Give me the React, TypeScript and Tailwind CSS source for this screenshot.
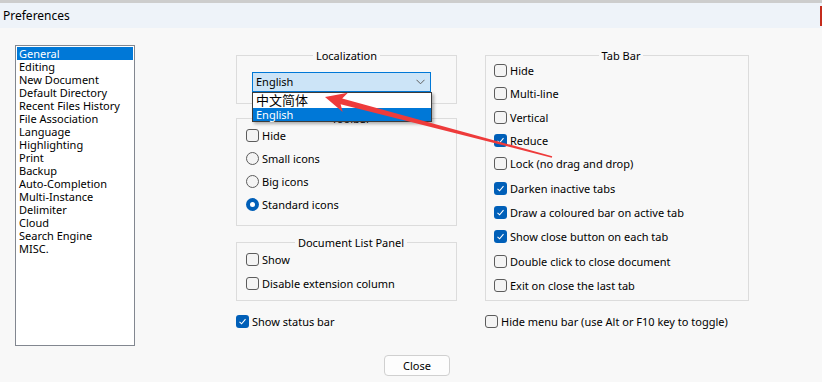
import React from 'react';

const FONT = { fontFamily: '"Noto Sans", "Noto Sans CJK SC", sans-serif' };

const categories = [
  'General', 'Editing', 'New Document', 'Default Directory', 'Recent Files History',
  'File Association', 'Language', 'Highlighting', 'Print', 'Backup',
  'Auto-Completion', 'Multi-Instance', 'Delimiter', 'Cloud', 'Search Engine', 'MISC.',
];

// row heights follow the uneven spacing of the original dialog
const tabBarOptions: { label: string; checked: boolean; h: string }[] = [
  { label: 'Hide', checked: false, h: 'h-[23px]' },
  { label: 'Multi-line', checked: false, h: 'h-[23px]' },
  { label: 'Vertical', checked: false, h: 'h-[24px]' },
  { label: 'Reduce', checked: true, h: 'h-[23px]' },
  { label: 'Lock (no drag and drop)', checked: false, h: 'h-[23px]' },
  { label: 'Darken inactive tabs', checked: true, h: 'h-[26px]' },
  { label: 'Draw a coloured bar on active tab', checked: true, h: 'h-[23px]' },
  { label: 'Show close button on each tab', checked: true, h: 'h-[25px]' },
  { label: 'Double click to close document', checked: false, h: 'h-[24px]' },
  { label: 'Exit on close the last tab', checked: false, h: 'h-[24px]' },
];

const Checkbox = ({ checked }: { checked?: boolean }) =>
  checked ? (
    <span className="w-[13px] h-[13px] rounded-[3px] bg-[#005fb8] flex items-center justify-center shrink-0">
      <svg width="9" height="9" viewBox="0 0 9 9">
        <polyline points="1.5,4.8 3.6,6.8 7.5,2.2" fill="none" stroke="#fff" strokeWidth="1.1" />
      </svg>
    </span>
  ) : (
    <span className="w-[13px] h-[13px] rounded-[3px] border border-[#5c5c5c] bg-[#f4f4f4] shrink-0" />
  );

const Radio = ({ checked }: { checked?: boolean }) =>
  checked ? (
    <span className="w-[13px] h-[13px] rounded-full bg-[#005fb8] flex items-center justify-center shrink-0">
      <span className="w-[5px] h-[5px] rounded-full bg-white" />
    </span>
  ) : (
    <span className="w-[13px] h-[13px] rounded-full border border-[#5c5c5c] bg-[#f4f4f4] shrink-0" />
  );

const Row = ({ children, label, h = 'h-[24px]' }: { children: React.ReactNode; label: string; h?: string }) => (
  <div className={`flex items-center gap-[3px] ${h}`}>
    {children}
    <span className="leading-[13px] whitespace-nowrap">{label}</span>
  </div>
);

const Legend = ({ title }: { title: string }) => (
  <div className="-mt-[7px] mx-auto w-fit px-[3px] bg-[#f8f8f8] leading-[14px]">{title}</div>
);

export default function App() {
  return (
    <div className="w-[822px] h-[382px] bg-[#f8f8f8] text-[11px] text-black relative overflow-hidden flex flex-col" style={FONT}>
      <div className="h-[3px] bg-[#cdcdcd]" />
      <div className="h-[25px] bg-[#eef3f9] flex items-center justify-between pl-[3px]">
        <span className="leading-[14px] text-[12px]">Preferences</span>
        <div className="w-[2px] h-[20px] bg-[#c42b1c]" />
      </div>

      <div className="flex pt-[17px] pl-[15px]">
        {/* category list */}
        <div className="w-[120px] h-[301px] border border-[#828790] bg-white pt-[1px] px-[1px]">
          {categories.map((c, i) => (
            <div
              key={c}
              className={`h-[13px] leading-[13px] pl-[2px] whitespace-nowrap ${i === 0 ? 'bg-[#0078d7] text-white' : ''}`}
            >
              {c}
            </div>
          ))}
        </div>

        {/* middle column */}
        <div className="ml-[101px] w-[221px] pt-[10px]">
          <div className="border border-[#dcdcdc] h-[49px]">
            <Legend title="Localization" />
            <div className="relative mt-[9px] ml-[15px] w-[179px]">
              <div className="h-[20px] border border-[#0078d7] bg-[#cce4f7] flex items-center justify-between pl-[3px] pr-[5px]">
                <span className="leading-[14px]">English</span>
                <svg width="9" height="6" viewBox="0 0 9 6">
                  <polyline points="0.5,0.8 4.5,4.8 8.5,0.8" fill="none" stroke="#606060" strokeWidth="1" />
                </svg>
              </div>
              <div className="absolute left-0 top-full w-[180px] border border-[#3c3c3c] bg-white shadow-[2px_2px_3px_rgba(0,0,0,0.3)] z-10">
                <div className="h-[15px] flex items-center pl-[3px] text-[13px] leading-[15px]">中文简体</div>
                <div className="h-[13px] flex items-center pl-[3px] bg-[#0078d7] text-white leading-[13px]">English</div>
              </div>
            </div>
          </div>

          <div className="border border-[#dcdcdc] mt-[14px] pl-[9px] pb-[9px]">
            <Legend title="Toolbar" />
            <div className="-mt-[2px]">
              <Row label="Hide" h="h-[23px]"><Checkbox /></Row>
              <Row label="Small icons" h="h-[23px]"><Radio /></Row>
              <Row label="Big icons" h="h-[23px]"><Radio /></Row>
              <Row label="Standard icons" h="h-[23px]"><Radio checked /></Row>
            </div>
          </div>

          <div className="border border-[#dcdcdc] mt-[16px] pl-[9px] pb-[5px]">
            <Legend title="Document List Panel" />
            <div className="-mt-[3px]">
              <Row label="Show"><Checkbox /></Row>
              <Row label="Disable extension column"><Checkbox /></Row>
            </div>
          </div>

          <div className="mt-[8px]">
            <Row label="Show status bar"><Checkbox checked /></Row>
          </div>
        </div>

        {/* right column */}
        <div className="ml-[28px] w-[264px] pt-[10px]">
          <div className="border border-[#dcdcdc] pl-[8px] pb-[3px]">
            <Legend title="Tab Bar" />
            <div className="-mt-[4px]">
              {tabBarOptions.map((o) => (
                <Row key={o.label} label={o.label} h={o.h}><Checkbox checked={o.checked} /></Row>
              ))}
            </div>
          </div>
          <div className="mt-[8px]">
            <Row label="Hide menu bar (use Alt or F10 key to toggle)"><Checkbox /></Row>
          </div>
        </div>
      </div>

      <div className="mt-[9px] ml-[384px]">
        <button className="w-[66px] h-[21px] rounded-[4px] border border-[#d0d0d0] bg-[#fdfdfd] leading-[14px]">
          Close
        </button>
      </div>

      {/* annotation arrow */}
      <svg className="absolute inset-0 pointer-events-none z-20" width="822" height="382">
        <polygon
          points="325,97 347.9,92.7 342.2,98.4 552.2,156.3 551.8,157.7 340.6,104.2 342.7,112.1"
          fill="#ee3b3b"
        />
      </svg>
    </div>
  );
}
